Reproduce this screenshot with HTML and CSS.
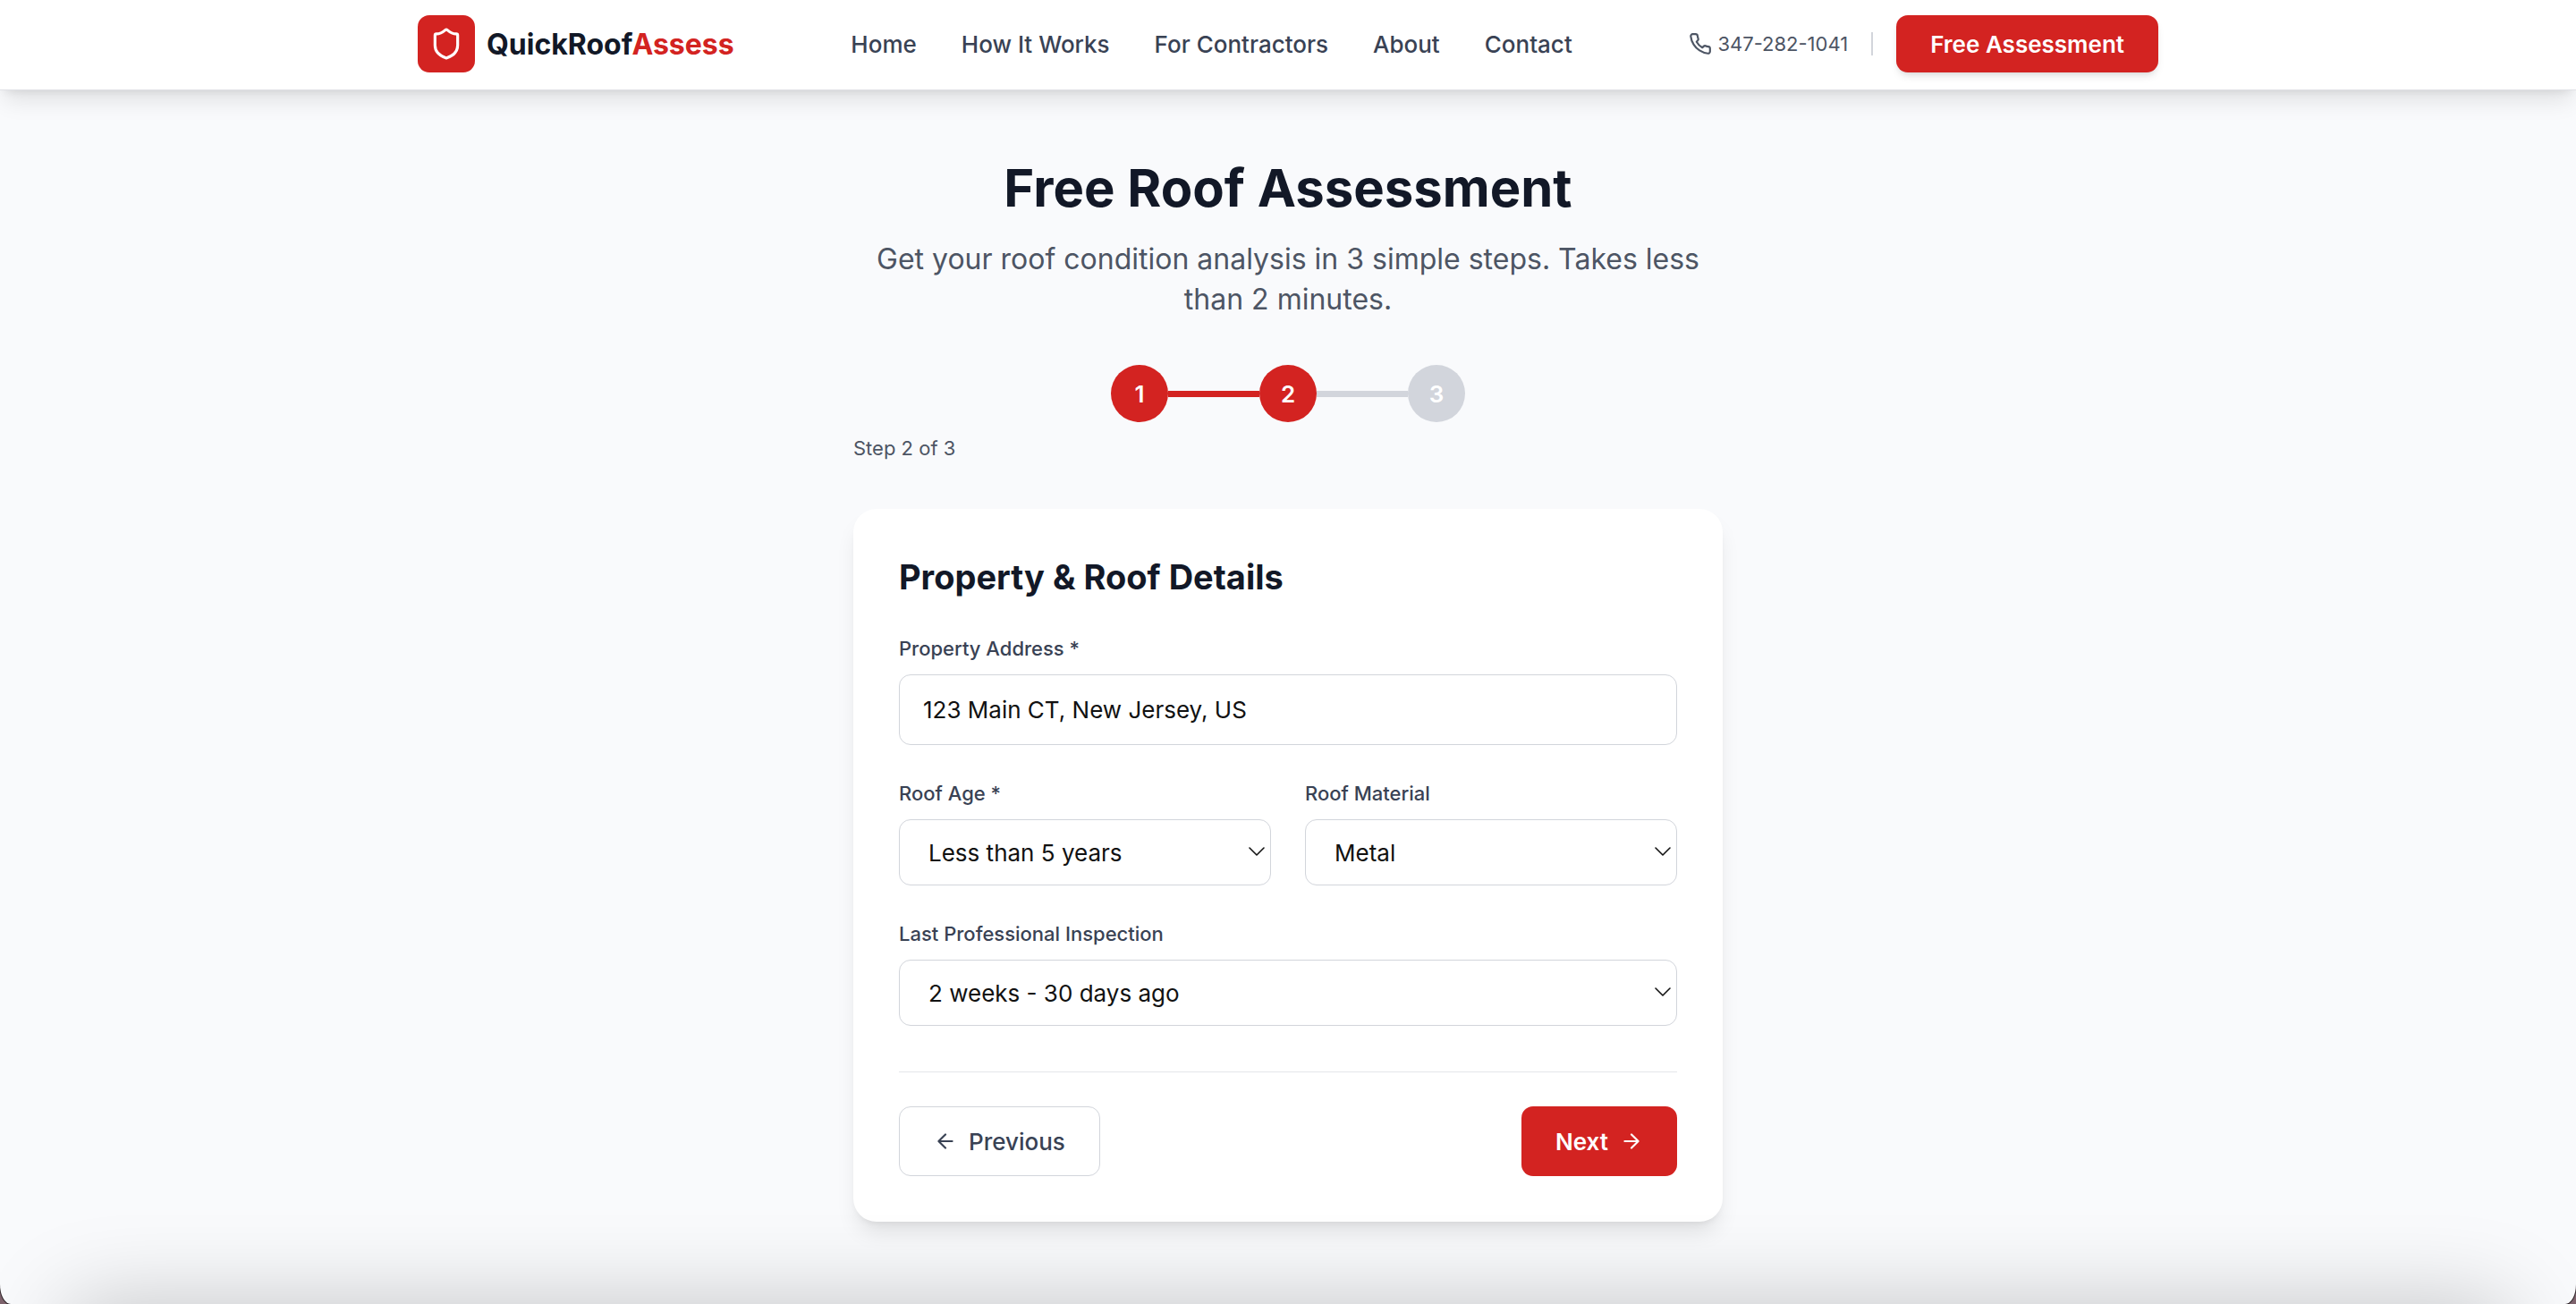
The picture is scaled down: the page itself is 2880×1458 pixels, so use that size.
FILE: index.html
```html
<!DOCTYPE html>
<html lang="en">
<head>
    <meta charset="UTF-8">
    <meta name="viewport" content="width=device-width, initial-scale=1.0">
    <title>Free Roof Assessment</title>
    <link rel="stylesheet" href="styles.css">
</head>
<body>
    <div class="page">
        <header class="header">
            <div class="header-inner">
                <a class="logo" href="#">
                    <span class="logo-tile">
                        <svg class="icon logo-icon" viewBox="0 0 24 24"><path d="M20 13c0 5-3.5 7.5-7.66 8.95a1 1 0 0 1-.67-.01C7.5 20.5 4 18 4 13V6a1 1 0 0 1 1-1c2 0 4.500-1.200 6.240-2.720a1.170 1.170 0 0 1 1.520 0C14.510 3.810 17 5 19 5a1 1 0 0 1 1 1z"/></svg>
                    </span>
                    <span class="logo-text">QuickRoof<span class="logo-accent">Assess</span></span>
                </a>
                <nav class="nav">
                    <a href="#">Home</a>
                    <a href="#">How It Works</a>
                    <a href="#">For Contractors</a>
                    <a href="#">About</a>
                    <a href="#">Contact</a>
                </nav>
                <div class="header-right">
                    <a class="phone" href="tel:347-282-1041">
                        <svg class="icon phone-icon" viewBox="0 0 24 24"><path d="M22 16.920v3a2 2 0 0 1-2.180 2 19.790 19.790 0 0 1-8.630-3.070 19.500 19.500 0 0 1-6-6 19.790 19.790 0 0 1-3.070-8.670A2 2 0 0 1 4.110 2h3a2 2 0 0 1 2 1.720 12.840 12.840 0 0 0 .7 2.810 2 2 0 0 1-.45 2.110L8.090 9.910a16 16 0 0 0 6 6l1.270-1.270a2 2 0 0 1 2.110-.45 12.840 12.840 0 0 0 2.810.7A2 2 0 0 1 22 16.920z"/></svg>
                        347-282-1041
                    </a>
                    <span class="separator"></span>
                    <button class="button button-header" type="button">Free Assessment</button>
                </div>
            </div>
        </header>

        <main class="main">
            <h1>Free Roof Assessment</h1>
            <p class="intro">Get your roof condition analysis in 3 simple steps. Takes less than 2 minutes.</p>

            <div class="steps">
                <span class="step step-done">1</span>
                <span class="step-line step-done"></span>
                <span class="step step-done">2</span>
                <span class="step-line"></span>
                <span class="step">3</span>
            </div>
            <p class="step-text">Step 2 of 3</p>

            <form class="card">
                <h2>Property &amp; Roof Details</h2>
                <div class="field">
                    <label for="address">Property Address *</label>
                    <input type="text" id="address" name="address" value="123 Main CT, New Jersey, US">
                </div>
                <div class="field-row">
                    <div class="field">
                        <label for="age">Roof Age *</label>
                        <div class="select-container">
                            <select id="age" name="age">
                                <option>Less than 5 years</option>
                            </select>
                            <svg class="icon chevron" viewBox="0 0 18 12"><path d="M1 1l8 8 8-8"/></svg>
                        </div>
                    </div>
                    <div class="field">
                        <label for="material">Roof Material</label>
                        <div class="select-container">
                            <select id="material" name="material">
                                <option>Metal</option>
                            </select>
                            <svg class="icon chevron" viewBox="0 0 18 12"><path d="M1 1l8 8 8-8"/></svg>
                        </div>
                    </div>
                </div>
                <div class="field">
                    <label for="inspection">Last Professional Inspection</label>
                    <div class="select-container">
                        <select id="inspection" name="inspection">
                            <option>2 weeks - 30 days ago</option>
                        </select>
                        <svg class="icon chevron" viewBox="0 0 18 12"><path d="M1 1l8 8 8-8"/></svg>
                    </div>
                </div>
                <div class="actions">
                    <button class="button button-previous" type="button">
                        <svg class="icon arrow" viewBox="0 0 24 24"><path d="M19 12H5M12 19l-7-7 7-7"/></svg>
                        Previous
                    </button>
                    <button class="button" type="button">
                        Next
                        <svg class="icon arrow" viewBox="0 0 24 24"><path d="M5 12h14M12 5l7 7-7 7"/></svg>
                    </button>
                </div>
            </form>
        </main>
        <div class="bottom-shade"></div>
    </div>
</body>
</html>
```
FILE: styles.css
```css
* {
    box-sizing: border-box;
}
html {
    background-color: #7d626c;
}
body {
    margin: 0;
    font-family: Inter, "Liberation Sans", sans-serif;
    font-size: 26px;
    color: #121827;
}
a {
    color: inherit;
    text-decoration: none;
}
h1, h2, p {
    margin: 0;
}
.page {
    position: relative;
    min-height: 100vh;
    overflow: hidden;
    background-color: #f9fafc;
    border-radius: 0 0 12px 12px / 0 0 22px 22px;
    box-shadow: 0 0 0 1px #2b2327;
}
.icon {
    fill: none;
    stroke: currentColor;
    stroke-width: 2;
    stroke-linecap: round;
    stroke-linejoin: round;
    flex-shrink: 0;
}

/* header */
.header {
    position: relative;
    padding: 17px 51px 19px;
    background-color: #fff;
    border-bottom: 1px solid #e0e1e6;
    box-shadow: 0 16px 24px -5px rgba(0, 0, 0, 0.1), 0 6px 10px -6px rgba(0, 0, 0, 0.1);
}
.header-inner {
    display: flex;
    justify-content: space-between;
    align-items: center;
    max-width: 1946px;
    margin: 0 auto;
}
.logo {
    display: flex;
    align-items: center;
    gap: 13px;
}
.logo-tile {
    display: flex;
    align-items: center;
    justify-content: center;
    width: 64px;
    height: 64px;
    color: #fff;
    background-color: #d32321;
    border-radius: 13px;
}
.logo-icon {
    width: 38px;
    height: 38px;
}
.logo-text {
    font-size: 32px;
    font-weight: 700;
}
.logo-accent {
    color: #d32321;
}
.nav {
    display: flex;
    gap: 50px;
    font-weight: 500;
    color: #394254;
}
.header-right {
    display: flex;
    align-items: center;
    gap: 26px;
}
.phone {
    display: flex;
    align-items: center;
    gap: 6px;
    font-size: 22px;
    color: #4d5564;
}
.phone-icon {
    width: 26px;
    height: 26px;
}
.separator {
    width: 2px;
    height: 26px;
    background-color: #d2d5db;
}
.button {
    display: flex;
    align-items: center;
    gap: 13px;
    height: 78px;
    padding: 0 38px;
    font-family: inherit;
    font-size: 26px;
    font-weight: 600;
    color: #fff;
    background-color: #d32321;
    border: none;
    border-radius: 13px;
    cursor: pointer;
}
.button-header {
    height: 64px;
    box-shadow: 0 6px 10px -2px rgba(0, 0, 0, 0.1), 0 3px 6px -3px rgba(0, 0, 0, 0.1);
}

/* intro and progress */
.main {
    max-width: 972px;
    margin: 0 auto;
    padding: 77px 0;
}
h1 {
    margin-bottom: 25px;
    font-size: 58px;
    line-height: 64px;
    text-align: center;
}
.intro {
    margin-bottom: 51px;
    font-size: 32px;
    line-height: 45px;
    text-align: center;
    color: #4d5564;
}
.steps {
    display: flex;
    justify-content: center;
    align-items: center;
    margin-bottom: 13px;
}
.step {
    display: flex;
    align-items: center;
    justify-content: center;
    width: 64px;
    height: 64px;
    font-weight: 600;
    color: #fff;
    background-color: #d2d5dc;
    border-radius: 50%;
}
.step-line {
    width: 102px;
    height: 7px;
    background-color: #d2d5dc;
}
.step-done {
    background-color: #d32321;
}
.step-text {
    margin-bottom: 52px;
    font-size: 22px;
    line-height: 32px;
    color: #4d5564;
}

/* form */
.card {
    display: flex;
    flex-direction: column;
    gap: 38px;
    padding: 51px;
    background-color: #fff;
    border-radius: 26px;
    box-shadow: 0 16px 24px -5px rgba(0, 0, 0, 0.1), 0 6px 10px -6px rgba(0, 0, 0, 0.1);
}
h2 {
    font-size: 38px;
    line-height: 51px;
}
.field-row {
    display: grid;
    grid-template-columns: 1fr 1fr;
    gap: 38px;
}
label {
    display: block;
    margin-bottom: 13px;
    font-size: 22px;
    font-weight: 500;
    line-height: 32px;
    color: #394254;
}
input, select {
    display: block;
    width: 100%;
    font-family: inherit;
    font-size: 26px;
    color: #111;
    background-color: #fff;
    border: 1px solid #d2d5db;
    border-radius: 13px;
}
input {
    height: 79px;
    padding: 0 26px;
}
select {
    height: 74px;
    padding: 0 32px;
    appearance: none;
}
.select-container {
    position: relative;
}
.chevron {
    position: absolute;
    top: 31px;
    right: 7px;
    width: 18px;
    height: 12px;
    color: #111;
    stroke-width: 1.6;
    pointer-events: none;
}
.actions {
    display: flex;
    justify-content: space-between;
    margin-top: 13px;
    padding-top: 38px;
    border-top: 1px solid #e4e6ea;
}
.button-previous {
    font-weight: 500;
    color: #394254;
    background-color: #fff;
    border: 1px solid #d2d5db;
}
.arrow {
    width: 26px;
    height: 26px;
}

/* soft shade along the bottom edge */
.bottom-shade {
    position: absolute;
    top: 100%;
    left: 76px;
    right: 76px;
    height: 200px;
    box-shadow: 0 0 100px rgba(0, 0, 0, 0.22);
}
```
